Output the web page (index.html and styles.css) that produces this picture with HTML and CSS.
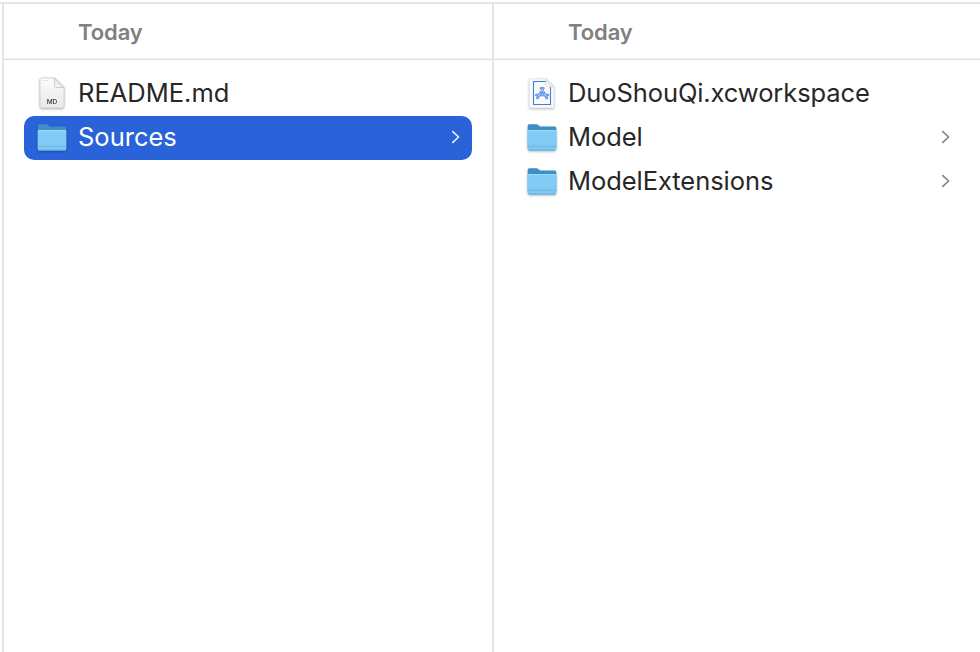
FILE: index.html
```html
<!DOCTYPE html>
<html lang="en">
<head>
<meta charset="utf-8">
<title>Files</title>
<link rel="stylesheet" href="styles.css">
</head>
<body>
<svg class="defs" width="0" height="0" aria-hidden="true">
  <defs>
    <linearGradient id="front" x1="0" y1="0" x2="0" y2="1"><stop offset="0" stop-color="#86cdf5"/><stop offset="1" stop-color="#7cc8f3"/></linearGradient>
    <linearGradient id="paper" x1="0" y1="0" x2="0" y2="1"><stop offset="0" stop-color="#fcfcfc"/><stop offset="1" stop-color="#e9e9e9"/></linearGradient>
    <linearGradient id="fold" x1="0" y1="1" x2="1" y2="0"><stop offset="0" stop-color="#ffffff"/><stop offset=".5" stop-color="#e6e6e6"/></linearGradient>
  </defs>
  <symbol id="folder" viewBox="0 0 32 32">
    <path d="M1.700 27V4.900Q1.700 3.300 3.300 3.300H10.500Q11.500 3.300 12.200 4L14 5.600H28.700Q30.300 5.600 30.300 7.200V27Z" fill="#3c8fc7"/>
    <path d="M1.700 10.200Q1.700 9 2.900 9H29.100Q30.300 9 30.300 10.200V28Q30.300 29.600 28.700 29.600H3.300Q1.700 29.600 1.700 28Z" fill="url(#front)"/>
    <path d="M2.500 9.500H29.500" stroke="#9ad9fb" stroke-width="1"/>
    <path d="M2 25.300H30" stroke="#64b4e3" stroke-width=".8"/>
    <path d="M2.800 29.200H29.200" stroke="#5aa8d8" stroke-width=".8"/>
  </symbol>
  <symbol id="chevron" viewBox="0 0 10 14">
    <path d="M1.800 1.600L7.600 7L1.800 12.400" fill="none" stroke="currentColor" stroke-width="1.700" stroke-linecap="round" stroke-linejoin="round"/>
  </symbol>
</svg>
<main class="browser">
  <section class="column">
    <h2 class="heading">Today</h2>
    <ul class="list">
      <li class="row">
        <svg class="icon" viewBox="0 0 32 32">
          <path d="M5.500 1H18.500L28 10.500V29Q28 31 26.500 31H5.500Q4 31 4 29.500V2.500Q4 1 5.500 1Z" fill="url(#paper)" stroke="#bdbdbd" stroke-width=".6"/>
          <path d="M18.500 1V9Q18.500 10.500 20 10.500H28Z" fill="url(#fold)" stroke="#b3b3b3" stroke-width=".6"/>
          <path d="M7 3.500H12" stroke="#d4d4d4" stroke-width=".8" stroke-dasharray="1.500 .5"/>
          <text class="kind" x="16" y="27" text-anchor="middle">MD</text>
        </svg>
        <span class="name">README.md</span>
      </li>
      <li class="row selected">
        <svg class="icon"><use href="#folder"/></svg>
        <span class="name">Sources</span>
        <svg class="chevron"><use href="#chevron"/></svg>
      </li>
    </ul>
  </section>
  <section class="column">
    <h2 class="heading">Today</h2>
    <ul class="list">
      <li class="row">
        <svg class="icon" viewBox="0 0 32 32">
          <path d="M4.700 1.800H20L28 9.800V29.500Q28 31 26.500 31H4.700Q3.200 31 3.200 29.500V3.300Q3.200 1.800 4.700 1.800Z" fill="#f9f9f9" stroke="#d6d6d6" stroke-width=".5"/>
          <path d="M20 4.500H7.500V27.500H24.500V9.500" fill="none" stroke="#3d7fe6" stroke-width="1.100"/>
          <path d="M20 1.800V8.300Q20 9.800 21.500 9.800H28Z" fill="url(#fold)" stroke="#c8c8c8" stroke-width=".5"/>
          <g fill="none" stroke-linecap="round">
            <path d="M15 11.200L20.800 21M17.400 11.200L11.400 21M10.400 18H21.900" stroke="#4284e8" stroke-width="2.500"/>
            <path d="M15 11.200L20.800 21M17.400 11.200L11.400 21M10.400 18H21.900" stroke="#c4dafb" stroke-width=".8"/>
          </g>
        </svg>
        <span class="name workspace">DuoShouQi.xcworkspace</span>
      </li>
      <li class="row">
        <svg class="icon"><use href="#folder"/></svg>
        <span class="name extensions">Model</span>
        <svg class="chevron"><use href="#chevron"/></svg>
      </li>
      <li class="row">
        <svg class="icon"><use href="#folder"/></svg>
        <span class="name extensions">ModelExtensions</span>
        <svg class="chevron"><use href="#chevron"/></svg>
      </li>
    </ul>
  </section>
</main>
</body>
</html>
```
FILE: styles.css
```css
* { box-sizing: border-box; }
body {
  margin: 0;
  overflow: hidden;
  background: #fff;
  color: #272727;
  font-family: Inter, "Liberation Sans", sans-serif;
}
.defs { position: absolute; }
.browser {
  display: grid;
  grid-template-columns: 490px 490px;
  height: 652px;
  padding-left: 2px;
  padding-top: 2px;
  background: linear-gradient(#e5e5e5, #e5e5e5) 0 2px / 100% 2px no-repeat;
}
.column {
  margin-top: 2px;
  border-left: 2px solid #e5e5e5;
}
.heading {
  height: 56px;
  margin: 0;
  padding-left: 74px;
  border-bottom: 1px solid #dedede;
  box-shadow: inset 0 -1px #f4f4f4;
  color: #808080;
  font-size: 22px;
  font-weight: 600;
  letter-spacing: -.1px;
  line-height: 57px;
}
.list {
  margin: 0;
  padding: 12px 20px 0;
  list-style: none;
}
.row {
  display: flex;
  align-items: center;
  height: 44px;
  padding: 0 11px 2px 12px;
  border-radius: 10px;
  color: #272727;
}
.icon {
  flex: none;
  width: 32px;
  height: 32px;
  margin-right: 10px;
  overflow: visible;
  filter: drop-shadow(0 1px 1px rgb(0 0 0 / 25%));
}
.kind {
  fill: #333;
  font-size: 6.500px;
  font-weight: 500;
}
.name {
  flex: 1;
  font-size: 25.500px;
  line-height: 42px;
  white-space: nowrap;
}
.workspace { letter-spacing: -.1px; }
.extensions { letter-spacing: -.06px; }
.chevron {
  flex: none;
  width: 10px;
  height: 14px;
  color: #858585;
}
.selected {
  background: #2962d9;
  color: #fff;
}
.selected .chevron { color: #e4ecfb; }
```
